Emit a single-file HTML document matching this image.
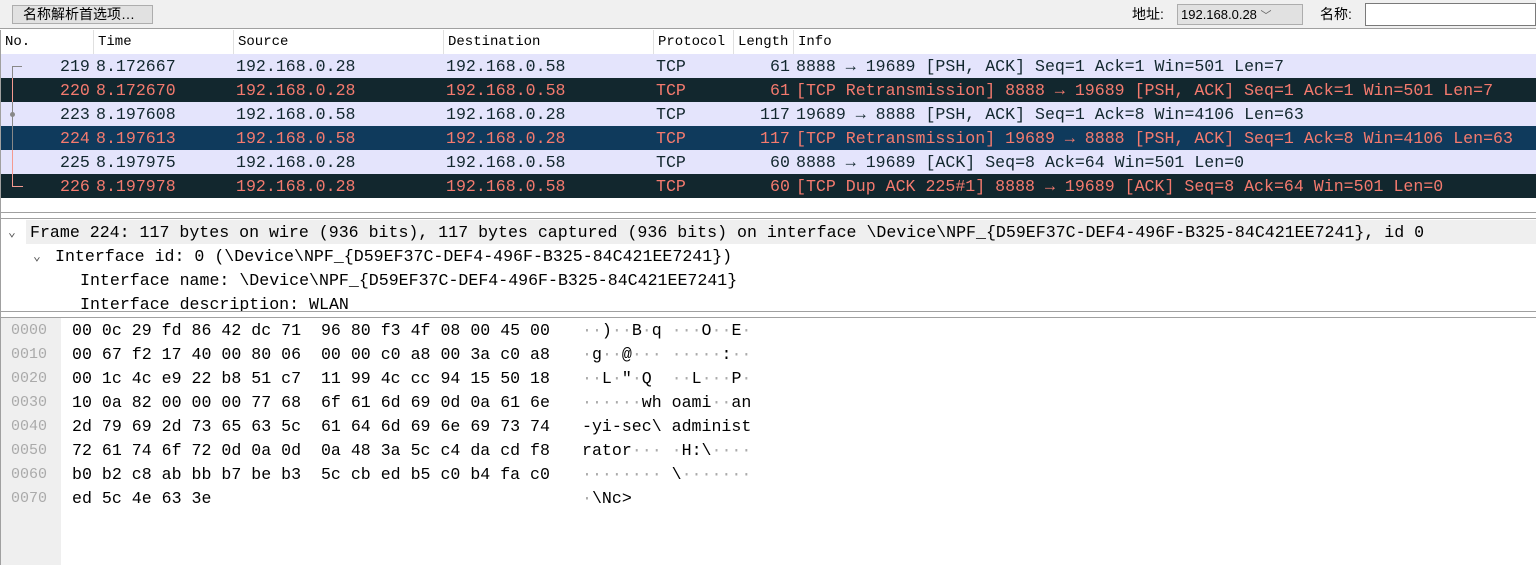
<!DOCTYPE html>
<html><head><meta charset="utf-8"><style>
*{margin:0;padding:0;box-sizing:border-box}
body{width:1536px;height:565px;overflow:hidden;background:#fff;position:relative;font-family:"Liberation Mono",monospace;}
.a{position:absolute;white-space:pre}
.m{font-size:16.6px;line-height:24px;padding-top:1px}
.tb{position:absolute;left:0;top:0;width:1536px;height:29px;background:#f0f0f0;border-bottom:1px solid #a0a0a0;font-family:"Liberation Sans","Noto Sans CJK SC",sans-serif;font-size:14px}
.row{position:absolute;left:1px;width:1535px;height:24px}
.r{color:#f47a6e}
.d{color:#aaa}
.hd{position:absolute;top:30px;height:24px;font-size:14px;line-height:24px;border-right:1px solid #e0e0e0;padding-left:5px}
.t span{position:absolute;top:1px}
</style></head><body>
<div class="tb">
 <div class="a" style="left:12px;top:5px;width:141px;height:19px;border:1px solid #adadad;background:#e1e1e1;line-height:17px;padding-left:10px;font-size:14px">名称解析首选项…</div>
 <div class="a" style="left:1132px;top:5px;line-height:19px">地址:</div>
 <div class="a" style="left:1177px;top:4px;width:126px;height:21px;border:1px solid #adadad;background:#e1e1e1;line-height:19px;padding-left:3px;font-size:13px">192.168.0.28 <span style="color:#666;font-size:11px">﹀</span></div>
 <div class="a" style="left:1320px;top:5px;line-height:19px">名称:</div>
 <div class="a" style="left:1365px;top:3px;width:171px;height:23px;border:1px solid #7a7a7a;background:#fff"></div>
</div>
<div class="a" style="left:0;top:30px;width:1px;height:535px;background:#a0a0a0"></div>
<div class="hd" style="left:0;width:94px">No.</div>
<div class="hd" style="left:93px;width:141px">Time</div>
<div class="hd" style="left:233px;width:211px">Source</div>
<div class="hd" style="left:443px;width:211px">Destination</div>
<div class="hd" style="left:653px;width:81px">Protocol</div>
<div class="hd" style="left:733px;width:61px">Length</div>
<div class="hd" style="left:793px;width:700px;border:none">Info</div>

<div class="row" style="top:54px;background:#e4e4fc"></div>
<div class="row" style="top:78px;background:#12272e"></div>
<div class="row" style="top:102px;background:#e4e4fc"></div>
<div class="row" style="top:126px;background:#0f3a5c"></div>
<div class="row" style="top:150px;background:#e4e4fc"></div>
<div class="row" style="top:174px;background:#12272e"></div>
<div class="a" style="left:12px;top:66px;width:10px;height:1px;background:#888"></div>
<div class="a" style="left:12px;top:66px;width:1px;height:120px;background:#f49a90"></div>
<div class="a" style="left:12px;top:66px;width:1px;height:12px;background:#888"></div>
<div class="a" style="left:12px;top:102px;width:1px;height:48px;background:#888"></div>
<div class="a" style="left:10px;top:112px;width:5px;height:5px;border-radius:3px;background:#888"></div>
<div class="a" style="left:12px;top:186px;width:11px;height:1px;background:#f49a90"></div>

<div class="a m t" style="left:0;top:54px;color:#12272e"><span style="left:60px">219</span><span style="left:96px">8.172667</span><span style="left:236px">192.168.0.28</span><span style="left:446px">192.168.0.58</span><span style="left:656px">TCP</span><span style="left:770px">61</span><span style="left:796px">8888 → 19689 [PSH, ACK] Seq=1 Ack=1 Win=501 Len=7</span></div>
<div class="a m t r" style="left:0;top:78px"><span style="left:60px">220</span><span style="left:96px">8.172670</span><span style="left:236px">192.168.0.28</span><span style="left:446px">192.168.0.58</span><span style="left:656px">TCP</span><span style="left:770px">61</span><span style="left:796px">[TCP Retransmission] 8888 → 19689 [PSH, ACK] Seq=1 Ack=1 Win=501 Len=7</span></div>
<div class="a m t" style="left:0;top:102px;color:#12272e"><span style="left:60px">223</span><span style="left:96px">8.197608</span><span style="left:236px">192.168.0.58</span><span style="left:446px">192.168.0.28</span><span style="left:656px">TCP</span><span style="left:760px">117</span><span style="left:796px">19689 → 8888 [PSH, ACK] Seq=1 Ack=8 Win=4106 Len=63</span></div>
<div class="a m t r" style="left:0;top:126px"><span style="left:60px">224</span><span style="left:96px">8.197613</span><span style="left:236px">192.168.0.58</span><span style="left:446px">192.168.0.28</span><span style="left:656px">TCP</span><span style="left:760px">117</span><span style="left:796px">[TCP Retransmission] 19689 → 8888 [PSH, ACK] Seq=1 Ack=8 Win=4106 Len=63</span></div>
<div class="a m t" style="left:0;top:150px;color:#12272e"><span style="left:60px">225</span><span style="left:96px">8.197975</span><span style="left:236px">192.168.0.28</span><span style="left:446px">192.168.0.58</span><span style="left:656px">TCP</span><span style="left:770px">60</span><span style="left:796px">8888 → 19689 [ACK] Seq=8 Ack=64 Win=501 Len=0</span></div>
<div class="a m t r" style="left:0;top:174px"><span style="left:60px">226</span><span style="left:96px">8.197978</span><span style="left:236px">192.168.0.28</span><span style="left:446px">192.168.0.58</span><span style="left:656px">TCP</span><span style="left:770px">60</span><span style="left:796px">[TCP Dup ACK 225#1] 8888 → 19689 [ACK] Seq=8 Ack=64 Win=501 Len=0</span></div>

<div class="a" style="left:0;top:212px;width:1536px;height:1px;background:#a0a0a0"></div>
<div class="a" style="left:0;top:218px;width:1536px;height:1px;background:#a0a0a0"></div>
<div class="a" style="left:26px;top:220px;width:1510px;height:24px;background:#efefef"></div>
<div class="a m" style="left:8px;top:220px;color:#555;font-size:13px">⌄</div>
<div class="a m" style="left:30px;top:220px">Frame 224: 117 bytes on wire (936 bits), 117 bytes captured (936 bits) on interface \Device\NPF_{D59EF37C-DEF4-496F-B325-84C421EE7241}, id 0</div>
<div class="a m" style="left:33px;top:244px;color:#555;font-size:13px">⌄</div>
<div class="a m" style="left:55px;top:244px">Interface id: 0 (\Device\NPF_{D59EF37C-DEF4-496F-B325-84C421EE7241})</div>
<div class="a m" style="left:80px;top:268px">Interface name: \Device\NPF_{D59EF37C-DEF4-496F-B325-84C421EE7241}</div>
<div class="a m" style="left:80px;top:292px;height:19px;overflow:hidden">Interface description: WLAN</div>
<div class="a" style="left:0;top:311px;width:1536px;height:1px;background:#a0a0a0"></div>
<div class="a" style="left:0;top:317px;width:1536px;height:1px;background:#a0a0a0"></div>

<div class="a" style="left:1px;top:318px;width:60px;height:247px;background:#efefef"></div>
<div class="a m d" style="left:11px;top:318px;font-size:15px">0000
0010
0020
0030
0040
0050
0060
0070</div>
<div class="a m" style="left:72px;top:318px">00 0c 29 fd 86 42 dc 71  96 80 f3 4f 08 00 45 00
00 67 f2 17 40 00 80 06  00 00 c0 a8 00 3a c0 a8
00 1c 4c e9 22 b8 51 c7  11 99 4c cc 94 15 50 18
10 0a 82 00 00 00 77 68  6f 61 6d 69 0d 0a 61 6e
2d 79 69 2d 73 65 63 5c  61 64 6d 69 6e 69 73 74
72 61 74 6f 72 0d 0a 0d  0a 48 3a 5c c4 da cd f8
b0 b2 c8 ab bb b7 be b3  5c cb ed b5 c0 b4 fa c0
ed 5c 4e 63 3e</div>
<div class="a m" style="left:582px;top:318px"><span class="d">··</span>)<span class="d">··</span>B<span class="d">·</span>q <span class="d">···</span>O<span class="d">··</span>E<span class="d">·</span>
<span class="d">·</span>g<span class="d">··</span>@<span class="d">···</span> <span class="d">·····</span>:<span class="d">··</span>
<span class="d">··</span>L<span class="d">·</span>"<span class="d">·</span>Q  <span class="d">··</span>L<span class="d">···</span>P<span class="d">·</span>
<span class="d">······</span>wh oami<span class="d">··</span>an
-yi-sec\ administ
rator<span class="d">···</span> <span class="d">·</span>H:\<span class="d">····</span>
<span class="d">········</span> \<span class="d">·······</span>
<span class="d">·</span>\Nc&gt;</div>
</body></html>
